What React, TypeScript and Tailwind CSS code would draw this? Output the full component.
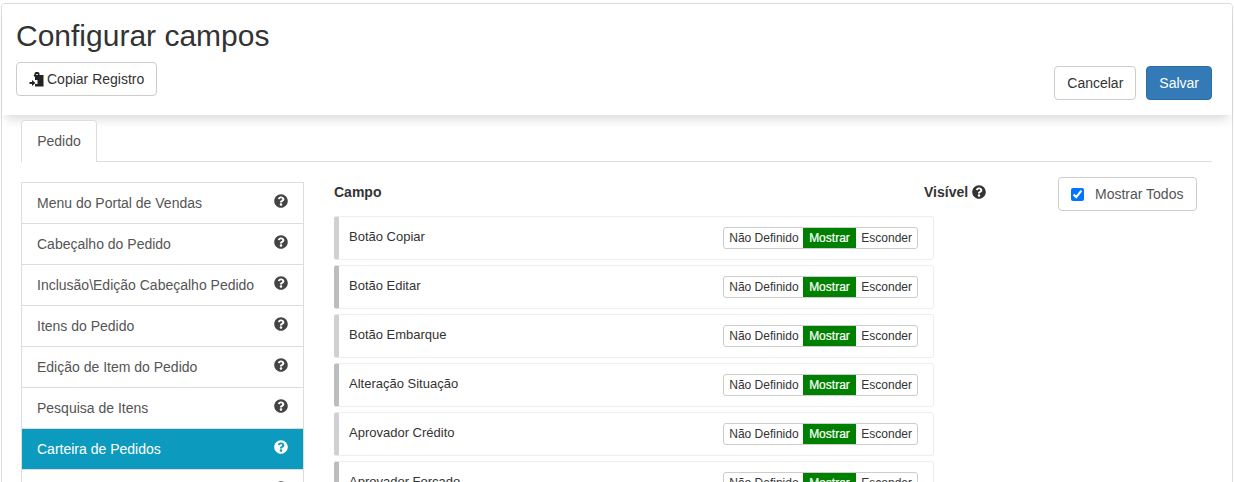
import { FaQuestionCircle } from "react-icons/fa";

const menu = [
  "Menu do Portal de Vendas",
  "Cabeçalho do Pedido",
  "Inclusão\\Edição Cabeçalho Pedido",
  "Itens do Pedido",
  "Edição de Item do Pedido",
  "Pesquisa de Itens",
  "Carteira de Pedidos",
  "",
];

const campos = [
  "Botão Copiar",
  "Botão Editar",
  "Botão Embarque",
  "Alteração Situação",
  "Aprovador Crédito",
  "Aprovador Forçado",
];

function CopyIcon() {
  return (
    <svg viewBox="0 0 15 15" className="h-[15px] w-[15px]" fill="#222">
      <path fillRule="evenodd" d="M5.500 1.500C5.800.5 6.500 0 7.500 0h1c1 0 1.700.5 2 1.500V3H14.500v11.500H6V12h2.500V8H6V5L4.500 3.500 5.500 2.500zM7.200 2v1h1.600V2z" />
      <path d="M0.500 10h2.500V8l3.500 3-3.500 3v-2H0.500z" />
    </svg>
  );
}

function MenuItem({ label, active }: { label: string; active: boolean }) {
  return (
    <div
      className={`-mt-px flex h-[42px] items-start justify-between border border-[#ddd] pl-[15px] pr-[15px] pt-[10px] text-[14px] leading-[20px] ${
        active ? "border-[#0c9abf] bg-[#0c9abf] text-white" : "bg-white text-[#555]"
      }`}
    >
      <span>{label}</span>
      <FaQuestionCircle className={`mt-[1px] text-[14px] ${active ? "text-white" : "text-[#444]"}`} />
    </div>
  );
}

function CampoRow({ label, dark }: { label: string; dark: boolean }) {
  return (
    <div
      className={`flex h-[44px] shrink-0 items-start justify-between rounded-[3px] border border-[#eee] border-l-[5px] bg-white pl-[10px] pr-[15px] ${
        dark ? "border-l-[#bdbdbd]" : "border-l-[#d0d0d0]"
      }`}
    >
      <span className="mt-[11px] text-[13px] leading-[18px] text-[#333]">{label}</span>
      <div className="mt-[10px] flex h-[22px] overflow-hidden rounded-[3px] border border-[#ccc] text-[12px] leading-[20px] text-[#333]">
        <span className="pl-[5px] pr-[4px]">Não Definido</span>
        <span className="bg-[#008000] px-[6.5px] text-white [-webkit-text-stroke:0.2px_white]">Mostrar</span>
        <span className="px-[5px]">Esconder</span>
      </div>
    </div>
  );
}

export default function App() {
  return (
    <div className="h-[482px] overflow-hidden bg-white pl-px pr-px pt-[3px] font-['Liberation_Sans',Arial,sans-serif] text-[#333]">
      <div className="h-[500px] rounded-[4px] border border-[#ddd] bg-white">
        <header className="flex h-[111px] items-end justify-between rounded-t-[4px] bg-white pl-[14px] pr-[20px] pb-[15px] shadow-[0_8px_10px_-4px_rgba(0,0,0,0.15)]">
          <div className="mb-[4px]">
            <h1 className="mb-[10px] text-[30px] font-normal leading-[33px] text-[#333]">Configurar campos</h1>
            <button className="flex h-[34px] items-center gap-[3px] rounded-[4px] border border-[#ccc] bg-white pl-[12px] pr-[12px] text-[14px] text-[#333]">
              <CopyIcon />
              Copiar Registro
            </button>
          </div>
          <div className="flex gap-[10px]">
            <button className="h-[34px] rounded-[4px] border border-[#ccc] bg-white px-[12px] text-[14px] text-[#333]">Cancelar</button>
            <button className="h-[34px] rounded-[4px] border border-[#2e6da4] bg-[#337ab7] px-[12px] text-[14px] text-white">Salvar</button>
          </div>
        </header>

        <div className="px-[19px] pt-[5px]">
          <div className="mr-[1px] flex h-[42px] border-b border-[#ddd]">
            <div className="h-[42px] w-[76px] rounded-t-[4px] border border-b-0 border-[#ddd] bg-white text-center text-[14px] leading-[40px] text-[#555]">
              Pedido
            </div>
          </div>

          <div className="mt-[21px] flex">
            <aside className="w-[283px] shrink-0">
              {menu.map((label, i) => (
                <MenuItem key={i} label={label} active={label === "Carteira de Pedidos"} />
              ))}
            </aside>

            <section className="ml-[30px] w-[600px] shrink-0">
              <div className="flex h-[33px] items-start pt-[2px] text-[14px] font-bold leading-[14px] text-[#333]">
                <span className="w-[590px]">Campo</span>
              </div>
              <div className="flex flex-col gap-[5px]">
                {campos.map((c, i) => (
                  <CampoRow key={c} label={c} dark={i % 2 === 1} />
                ))}
              </div>
            </section>

            <div className="relative flex-1">
              <div className="absolute left-[-10px] top-[-1px] flex items-center gap-[4px] text-[14px] font-bold leading-[20px]">
                Visível <FaQuestionCircle className="text-[14px] text-[#333]" />
              </div>
              <label className="absolute left-[124px] top-[-6px] flex h-[34px] w-[139px] items-center rounded-[4px] border border-[#ccc] bg-white pl-[12px] text-[14px] text-[#555]">
                <input type="checkbox" defaultChecked className="mr-[11px] h-[13px] w-[13px] accent-[#0075ff]" />
                Mostrar Todos
              </label>
            </div>
          </div>
        </div>
      </div>
    </div>
  );
}
